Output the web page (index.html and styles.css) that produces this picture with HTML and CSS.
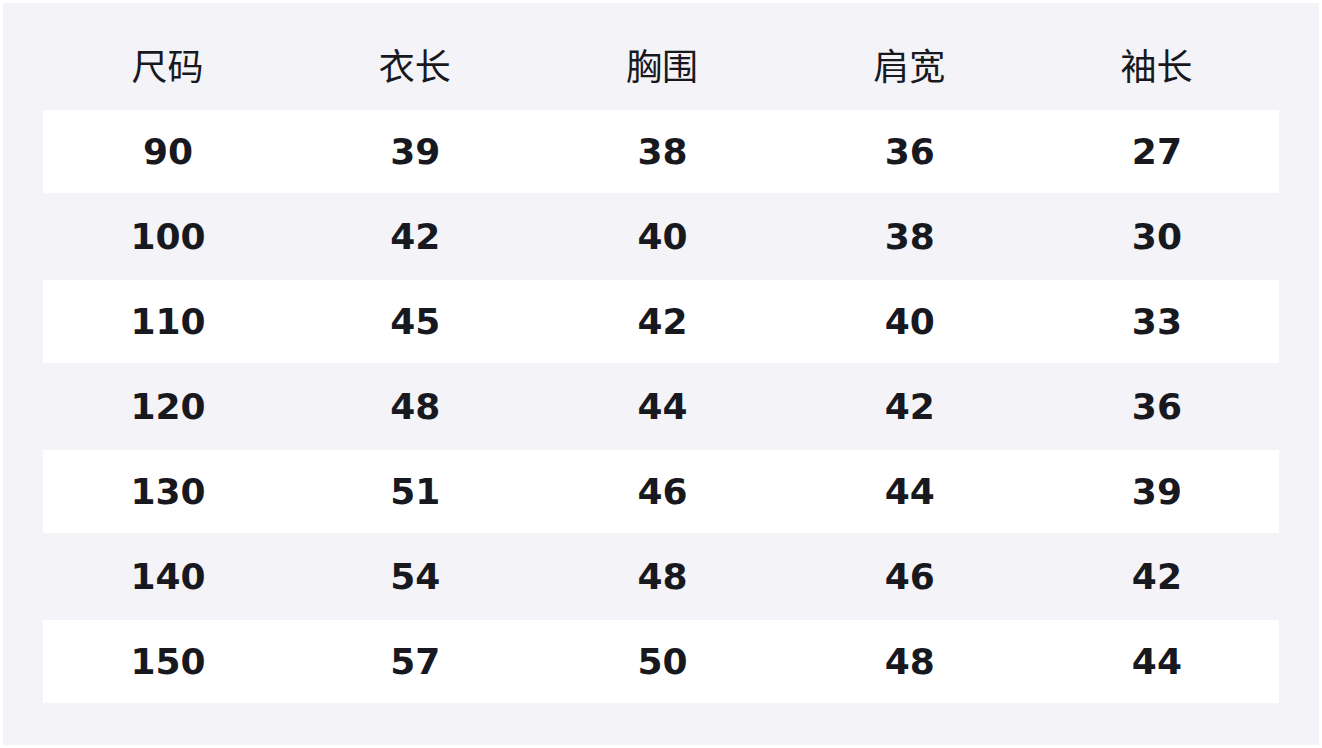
FILE: index.html
```html
<!DOCTYPE html>
<html lang="zh">
<head>
<meta charset="utf-8">
<title>尺码表</title>
<link rel="stylesheet" href="styles.css">
</head>
<body>
<div class="panel">
  <div class="row head"><div>尺码</div><div>衣长</div><div>胸围</div><div>肩宽</div><div>袖长</div></div>
  <div class="row odd"><div>90</div><div>39</div><div>38</div><div>36</div><div>27</div></div>
  <div class="row even"><div>100</div><div>42</div><div>40</div><div>38</div><div>30</div></div>
  <div class="row odd"><div>110</div><div>45</div><div>42</div><div>40</div><div>33</div></div>
  <div class="row even"><div>120</div><div>48</div><div>44</div><div>42</div><div>36</div></div>
  <div class="row odd"><div>130</div><div>51</div><div>46</div><div>44</div><div>39</div></div>
  <div class="row even"><div>140</div><div>54</div><div>48</div><div>46</div><div>42</div></div>
  <div class="row odd"><div>150</div><div>57</div><div>50</div><div>48</div><div>44</div></div>
</div>
</body>
</html>
```
FILE: styles.css
```css
html, body {
  margin: 0;
  background: #ffffff;
}
body {
  padding: 3px;
}
.panel {
  width: 1316px;
  height: 742px;
  box-sizing: border-box;
  background: #f3f3f8;
  padding: 22px 40px 42px;
  display: flex;
  flex-direction: column;
}
.row {
  display: grid;
  grid-template-columns: repeat(5, 1fr);
  align-items: center;
  justify-items: center;
  color: #18181f;
  font-size: 36px;
}
.row > div {
  padding-left: 3px;
}
.head {
  height: 85px;
  font-family: "Noto Sans CJK SC", "Noto Sans", sans-serif;
  font-weight: 400;
}
.head > div {
  padding-left: 2px;
  padding-bottom: 7px;
}
.odd {
  height: 83px;
  background: #ffffff;
}
.even {
  height: 87px;
}
.odd, .even {
  font-family: "DejaVu Sans", "Liberation Sans", sans-serif;
  font-weight: 700;
  font-size: 36px;
}
```
